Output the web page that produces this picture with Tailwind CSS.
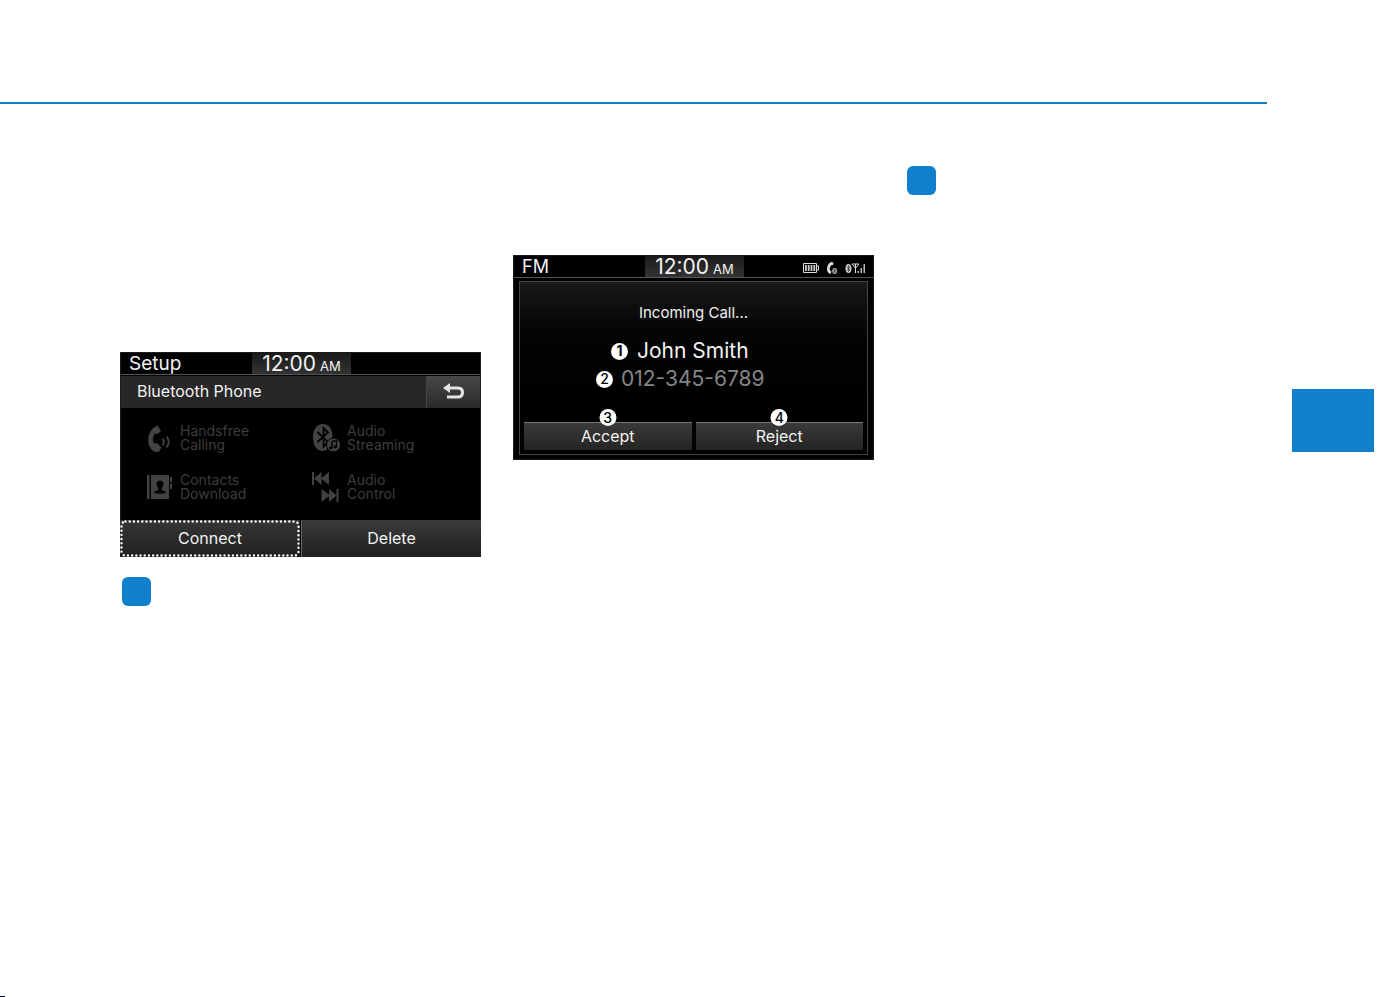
<!DOCTYPE html>
<html lang="en">
<head>
<meta charset="utf-8">
<meta name="viewport" content="width=device-width, initial-scale=1">
<title>Bluetooth Phone</title>
<script src="https://cdn.jsdelivr.net/npm/@tailwindcss/browser@4"></script>
</head>
<body class="flex min-h-screen flex-col bg-white font-['Inter','Liberation_Sans',sans-serif] text-[#f2f2f2]">
  <header class="pt-[102px] pr-[121px]">
    <hr class="h-[2px] border-0 bg-[#1080cc]">
  </header>

  <main class="flex flex-1 items-start gap-8 pr-[14px] pl-[120px]">
    <!-- Setup screen -->
    <section class="w-[361px] shrink-0 pt-[248px]">
      <div class="border border-[#1c1c1c] bg-black">
        <div class="grid h-[22px] grid-cols-[131px_99px_1fr] items-center border-b border-[#555]">
          <h2 class="pl-2 text-[19px] leading-5">Setup</h2>
          <p class="flex h-full items-center justify-center gap-1 bg-linear-to-b from-[#1a1a1a] to-[#333]"><span class="text-[21px] leading-5">12:00</span><span class="pt-1 text-[13px] leading-4">AM</span></p>
        </div>
        <div class="mt-px flex h-8 items-center bg-[#272727]">
          <h3 class="flex-1 pb-[2px] pl-4 text-base leading-5">Bluetooth Phone</h3>
          <button type="button" aria-label="Back" class="flex h-full w-[54px] items-center justify-center border-l border-[#444] bg-linear-to-b from-[#484848] to-[#2a2a2a]">
            <svg class="h-[18px] w-[22px]" viewBox="0 0 22 18" fill="none"><path d="M6 5H15Q19.500 5 19.500 9.500T15 14H4" stroke="#e4e4e4" stroke-width="3"/><path d="M0 5L7 0V10Z" fill="#e4e4e4"/></svg>
          </button>
        </div>
        <ul class="grid h-[113px] grid-cols-[167px_1fr] grid-rows-[49px_49px] pt-[5px] pl-[25px] text-sm leading-[14px] text-[#3d3d3d]">
          <li class="flex items-center gap-[6px]">
            <svg class="h-7 w-7" viewBox="0 0 28 28" fill="none"><path d="M8.500 3L11.500 1.500L15 7L11.500 10L9 9.500Q5.500 14 8 19.500L11 19L15.500 23.500L13.500 27Q9 30 5 25Q1 20 2.500 12.500Q4 6 8.500 3Z" fill="#424242"/><path d="M16.500 14.500Q19.500 18 16.500 21.500M20.500 12.500Q25 18 20.500 23.500" stroke="#424242" stroke-width="1.800"/></svg>
            <span>Handsfree<br>Calling</span>
          </li>
          <li class="flex items-center gap-[6px]">
            <svg class="h-[30px] w-7" viewBox="0 0 28 30" fill="none"><path d="M10 1C16 1 19.500 6 19.500 14L14 20L14 27L10 28C4 28 0 23 0 14.500S4 1 10 1Z" fill="#424242"/><path d="M4.500 9L15 19L10.500 23.500V5L15 9.500L4.500 19" stroke="#000" stroke-width="1.800"/><circle cx="20.500" cy="22" r="7" fill="#424242" stroke="#000"/><path d="M19 25V18.500L23.500 17.500V24" stroke="#000" stroke-width="1.300"/><ellipse cx="17.800" cy="25" rx="1.800" ry="1.400" fill="#000"/><ellipse cx="22.300" cy="24" rx="1.800" ry="1.400" fill="#000"/></svg>
            <span>Audio<br>Streaming</span>
          </li>
          <li class="flex items-center gap-[6px]">
            <svg class="h-7 w-7" viewBox="0 0 28 28" fill="#424242"><path d="M1 2H3.500V26H1ZM5 2H23V26H5ZM24 4H26V9H24ZM24 10.500H26V16H24Z"/><path d="M14 7.500C18.500 7.500 18 13 15.800 15V17L19.500 18.500V20.500H8.500V18.500L12.200 17V15C10 13 9.500 7.500 14 7.500Z" fill="#000"/></svg>
            <span>Contacts<br>Download</span>
          </li>
          <li class="flex items-center gap-[6px]">
            <svg class="h-[32px] w-7 overflow-visible" viewBox="0 0 28 32" fill="#424242"><path d="M-1 1H1V14H-1ZM1 7.500L8.500 1V14ZM8 7.500L16 1V14ZM8.500 18L17 24.500L8.500 31ZM16 18L23.500 24.500L16 31ZM23.500 18H25.500V31H23.500Z"/></svg>
            <span>Audio<br>Control</span>
          </li>
        </ul>
        <div class="-m-px grid h-[37px] grid-cols-[180px_1fr] text-base leading-5">
          <button type="button" class="relative bg-linear-to-b from-[#363636] to-[#202020] pb-[2px]">
            <svg class="absolute inset-0 h-full w-full" fill="none" aria-hidden="true"><rect class="h-[calc(100%-3px)] w-[calc(100%-3px)]" x="1.500" y="1.500" rx="4" stroke="#fff" stroke-width="2.400" stroke-linecap="round" stroke-dasharray="0 4.200"/></svg>
            Connect
          </button>
          <button type="button" class="ml-px border-l border-[#666] bg-linear-to-b from-[#3a3a3a] to-[#202020] pb-[2px]">Delete</button>
        </div>
      </div>
      <div class="mt-5 ml-[2px] size-[29px] rounded-md bg-[#1080cc]"></div>
    </section>

    <!-- Incoming call screen -->
    <section class="w-[361px] shrink-0 pt-[151px]">
      <div class="border border-[#1c1c1c] bg-black pb-1">
        <div class="grid h-[22px] grid-cols-[131px_99px_1fr] items-center border-b border-[#555]">
          <h2 class="pl-2 text-lg leading-5">FM</h2>
          <p class="flex h-full items-center justify-center gap-1 bg-linear-to-b from-[#1a1a1a] to-[#333]"><span class="text-[21px] leading-5">12:00</span><span class="pt-1 text-[13px] leading-4">AM</span></p>
          <div class="flex items-center justify-end gap-[7px] pt-[2px] pr-[7px]">
            <svg class="h-3 w-4" viewBox="0 0 16 12" fill="none"><path d="M.5 1.500H13.500V10.500H.5ZM14 4H15.500V8H14" stroke="#ddd"/><path d="M2 3H3.800V9H2ZM4.800 3H6.600V9H4.800ZM7.600 3H9.400V9H7.600ZM10.400 3H12.200V9H10.400Z" fill="#ccc"/></svg>
            <svg class="h-3 w-3" viewBox="0 0 12 12" fill="none"><path d="M5 0L7.500 .5L7 3L5 3.300Q3 6 4 8.500L5.500 9.500L4.500 12Q1 11 1 7Q1 2 5 0Z" fill="#ddd"/><ellipse cx="8.700" cy="9" rx="2.500" ry="3" fill="#aaa"/><path d="M7.500 7.700L9.700 10L8.700 11V7L9.700 8L7.500 10.300" stroke="#333" stroke-width=".6"/></svg>
            <svg class="h-3 w-[21px]" viewBox="0 0 21 12" fill="none"><ellipse cx="3.500" cy="6.500" rx="3" ry="4.500" fill="#ccc"/><path d="M1.800 4.500L5 8L3.500 9.500V3.500L5 5L1.800 8.500" stroke="#333" stroke-width=".7"/><path d="M7 2H14L10.500 6ZM10.500 2V11" stroke="#ddd"/><path d="M12.500 9H14V11H12.500ZM15.500 6H17V11H15.500ZM18.500 2H20V11H18.500Z" fill="#bbb"/></svg>
          </div>
        </div>
        <div class="mx-[5px] mt-[3px] flex h-[174px] flex-col border border-[#444] bg-linear-to-b from-[#191919] via-[#050505] via-30% to-black px-[4px] pb-1">
          <p class="mt-[21px] text-center text-[15px] leading-5">Incoming Call...</p>
          <p class="mt-4 flex items-center gap-[9px] pl-[87px] text-[21px] leading-6"><span class="flex size-[17px] items-center justify-center rounded-full bg-white text-sm leading-none font-bold text-black">1</span>John Smith</p>
          <p class="mt-1 flex items-center gap-2 pl-[72px] text-[21px] leading-6 text-[#858585]"><span class="flex size-[17px] items-center justify-center rounded-full bg-white text-sm leading-none font-medium text-black">2</span>012-345-6789</p>
          <div class="mt-auto grid h-7 grid-cols-2 gap-1 text-base leading-5">
            <button type="button" class="relative border-t border-[#777] bg-linear-to-b from-[#3a3a3a] to-[#242424] pb-[2px]"><span class="absolute -top-[14px] left-1/2 flex size-[17px] -translate-x-1/2 items-center justify-center rounded-full bg-white text-sm leading-none font-medium text-black">3</span>Accept</button>
            <button type="button" class="relative border-t border-[#777] bg-linear-to-b from-[#3a3a3a] to-[#242424] pb-[2px]"><span class="absolute -top-[14px] left-1/2 flex size-[17px] -translate-x-1/2 items-center justify-center rounded-full bg-white text-sm leading-none font-medium text-black">4</span>Reject</button>
          </div>
        </div>
      </div>
    </section>

    <section class="flex-1 pt-[62px]">
      <div class="ml-px size-[29px] rounded-md bg-[#1080cc]"></div>
    </section>

    <!-- Chapter tab -->
    <aside class="mt-[285px] h-[63px] w-[82px] shrink-0 bg-[#1080cc]"></aside>
  </main>

  <footer>
    <div class="h-px w-[5px] bg-[#000030]"></div>
  </footer>
</body>
</html>
